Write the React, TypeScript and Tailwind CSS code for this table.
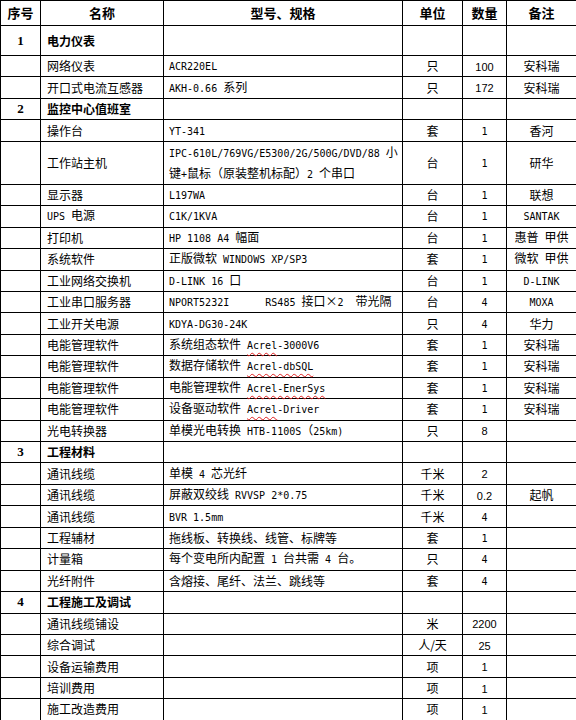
import type { ReactNode } from 'react'

// ascii runs get a narrow mono face, cjk runs stay in the cjk face
function Txt({ t }: { t: string }) {
  const parts = t.match(/[\x00-\x7F]+|[^\x00-\x7F]+/g) ?? []
  return (
    <>
      {parts.map((p, i) =>
        /^[\x00-\x7F]/.test(p) ? (
          <span key={i} className="font-['DejaVu_Sans_Mono',monospace] text-[10px]">
            {p}
          </span>
        ) : (
          <span key={i}>{p}</span>
        )
      )}
    </>
  )
}

function Wavy({ children }: { children: ReactNode }) {
  return (
    <span className="underline decoration-wavy decoration-[#e02020] decoration-1 underline-offset-[3px]">
      {children}
    </span>
  )
}

type Row =
  | { kind: 'section'; no: string; title: string; tall?: boolean }
  | {
      kind: 'item'
      name: string
      spec?: ReactNode
      unit?: string
      qty?: string
      sans?: boolean
      note?: string
      double?: boolean
    }

const rows: Row[] = [
  { kind: 'section', no: '1', title: '电力仪表', tall: true },
  { kind: 'item', name: '网络仪表', spec: <Txt t="ACR220EL" />, unit: '只', qty: '100', sans: true, note: '安科瑞' },
  { kind: 'item', name: '开口式电流互感器', spec: <Txt t="AKH-0.66 系列" />, unit: '只', qty: '172', sans: true, note: '安科瑞' },
  { kind: 'section', no: '2', title: '监控中心值班室' },
  { kind: 'item', name: '操作台', spec: <Txt t="YT-341" />, unit: '套', qty: '1', note: '香河' },
  {
    kind: 'item',
    name: '工作站主机',
    spec: (
      <span className="block leading-[19px]">
        <Txt t="IPC-610L/769VG/E5300/2G/500G/DVD/88 小" />
        <br />
        <Txt t="键+鼠标（原装整机标配）2 个串口" />
      </span>
    ),
    unit: '台',
    qty: '1',
    note: '研华',
    double: true,
  },
  { kind: 'item', name: '显示器', spec: <Txt t="L197WA" />, unit: '台', qty: '1', note: '联想' },
  { kind: 'item', name: 'UPS 电源', spec: <Txt t="C1K/1KVA" />, unit: '台', qty: '1', note: 'SANTAK' },
  { kind: 'item', name: '打印机', spec: <Txt t="HP 1108 A4 幅面" />, unit: '台', qty: '1', note: '惠普 甲供' },
  { kind: 'item', name: '系统软件', spec: <Txt t="正版微软 WINDOWS XP/SP3" />, unit: '套', qty: '1', note: '微软 甲供' },
  { kind: 'item', name: '工业网络交换机', spec: <Txt t="D-LINK 16 口" />, unit: '台', qty: '1', note: 'D-LINK' },
  { kind: 'item', name: '工业串口服务器', spec: <Txt t="NPORT5232I      RS485 接口×2  带光隔" />, unit: '台', qty: '4', note: 'MOXA' },
  { kind: 'item', name: '工业开关电源', spec: <Txt t="KDYA-DG30-24K" />, unit: '只', qty: '4', note: '华力' },
  {
    kind: 'item',
    name: '电能管理软件',
    spec: (
      <>
        <Txt t="系统组态软件 " />
        <Wavy>
          <Txt t="Acrel" />
        </Wavy>
        <Txt t="-3000V6" />
      </>
    ),
    unit: '套',
    qty: '1',
    note: '安科瑞',
  },
  {
    kind: 'item',
    name: '电能管理软件',
    spec: (
      <>
        <Txt t="数据存储软件 " />
        <Wavy>
          <Txt t="Acrel-dbSQL" />
        </Wavy>
      </>
    ),
    unit: '套',
    qty: '1',
    note: '安科瑞',
  },
  {
    kind: 'item',
    name: '电能管理软件',
    spec: (
      <>
        <Txt t="电能管理软件 " />
        <Wavy>
          <Txt t="Acrel-EnerSys" />
        </Wavy>
      </>
    ),
    unit: '套',
    qty: '1',
    note: '安科瑞',
  },
  {
    kind: 'item',
    name: '电能管理软件',
    spec: (
      <>
        <Txt t="设备驱动软件 " />
        <Wavy>
          <Txt t="Acrel" />
        </Wavy>
        <Txt t="-Driver" />
      </>
    ),
    unit: '套',
    qty: '1',
    note: '安科瑞',
  },
  { kind: 'item', name: '光电转换器', spec: <Txt t="单模光电转换 HTB-1100S（25km)" />, unit: '只', qty: '8', sans: true },
  { kind: 'section', no: '3', title: '工程材料' },
  { kind: 'item', name: '通讯线缆', spec: <Txt t="单模 4 芯光纤" />, unit: '千米', qty: '2', sans: true },
  { kind: 'item', name: '通讯线缆', spec: <Txt t="屏蔽双绞线 RVVSP 2*0.75" />, unit: '千米', qty: '0.2', sans: true, note: '起帆' },
  { kind: 'item', name: '通讯线缆', spec: <Txt t="BVR 1.5mm" />, unit: '千米', qty: '4' },
  { kind: 'item', name: '工程辅材', spec: <Txt t="拖线板、转换线、线管、标牌等" />, unit: '套', qty: '1' },
  { kind: 'item', name: '计量箱', spec: <Txt t="每个变电所内配置 1 台共需 4 台。" />, unit: '只', qty: '4' },
  { kind: 'item', name: '光纤附件', spec: <Txt t="含熔接、尾纤、法兰、跳线等" />, unit: '套', qty: '4' },
  { kind: 'section', no: '4', title: '工程施工及调试' },
  { kind: 'item', name: '通讯线缆铺设', unit: '米', qty: '2200', sans: true },
  { kind: 'item', name: '综合调试', unit: '人/天', qty: '25', sans: true },
  { kind: 'item', name: '设备运输费用', unit: '项', qty: '1', sans: true },
  { kind: 'item', name: '培训费用', unit: '项', qty: '1', sans: true },
  { kind: 'item', name: '施工改造费用', unit: '项', qty: '1', sans: true },
]

const cell = 'border border-black p-0 align-middle'

export default function App() {
  return (
    <div className="w-[576px] h-[720px] overflow-hidden bg-white text-black font-['Noto_Sans_CJK_SC',sans-serif] text-[12px] leading-[16px]">
      <table className="w-[576px] table-fixed border-collapse">
        <colgroup>
          <col className="w-[40px]" />
          <col className="w-[123px]" />
          <col className="w-[239px]" />
          <col className="w-[60px]" />
          <col className="w-[44px]" />
          <col className="w-[70px]" />
        </colgroup>
        <thead>
          <tr className="h-[25px] text-[13px] font-bold">
            <th className={`${cell} text-center`}>序号</th>
            <th className={`${cell} text-center`}>名称</th>
            <th className={`${cell} text-center`}>型号、规格</th>
            <th className={`${cell} text-center`}>单位</th>
            <th className={`${cell} text-center`}>数量</th>
            <th className={`${cell} text-center`}>备注</th>
          </tr>
        </thead>
        <tbody>
          {rows.map((r, i) =>
            r.kind === 'section' ? (
              <tr key={i} className={r.tall ? 'h-[30px]' : 'h-[21.45px]'}>
                <td className={`${cell} text-center font-['Liberation_Serif',serif] font-bold text-[13px]`}>{r.no}</td>
                <td className={`${cell} pl-[6px] font-bold`}>{r.title}</td>
                <td className={cell}></td>
                <td className={cell}></td>
                <td className={cell}></td>
                <td className={cell}></td>
              </tr>
            ) : (
              <tr key={i} className={r.double ? 'h-[42.9px]' : 'h-[21.45px]'}>
                <td className={cell}></td>
                <td className={`${cell} pl-[6px] whitespace-nowrap`}>
                  <Txt t={r.name} />
                </td>
                <td className={`${cell} pl-[5px] whitespace-pre`}>{r.spec}</td>
                <td className={`${cell} text-center`}>{r.unit}</td>
                <td className={`${cell} text-center`}>
                  {r.qty &&
                    (r.sans ? (
                      <span className="font-['Liberation_Sans',sans-serif] text-[11px]">{r.qty}</span>
                    ) : (
                      <Txt t={r.qty} />
                    ))}
                </td>
                <td className={`${cell} text-center whitespace-nowrap`}>{r.note && <Txt t={r.note} />}</td>
              </tr>
            )
          )}
        </tbody>
      </table>
    </div>
  )
}
